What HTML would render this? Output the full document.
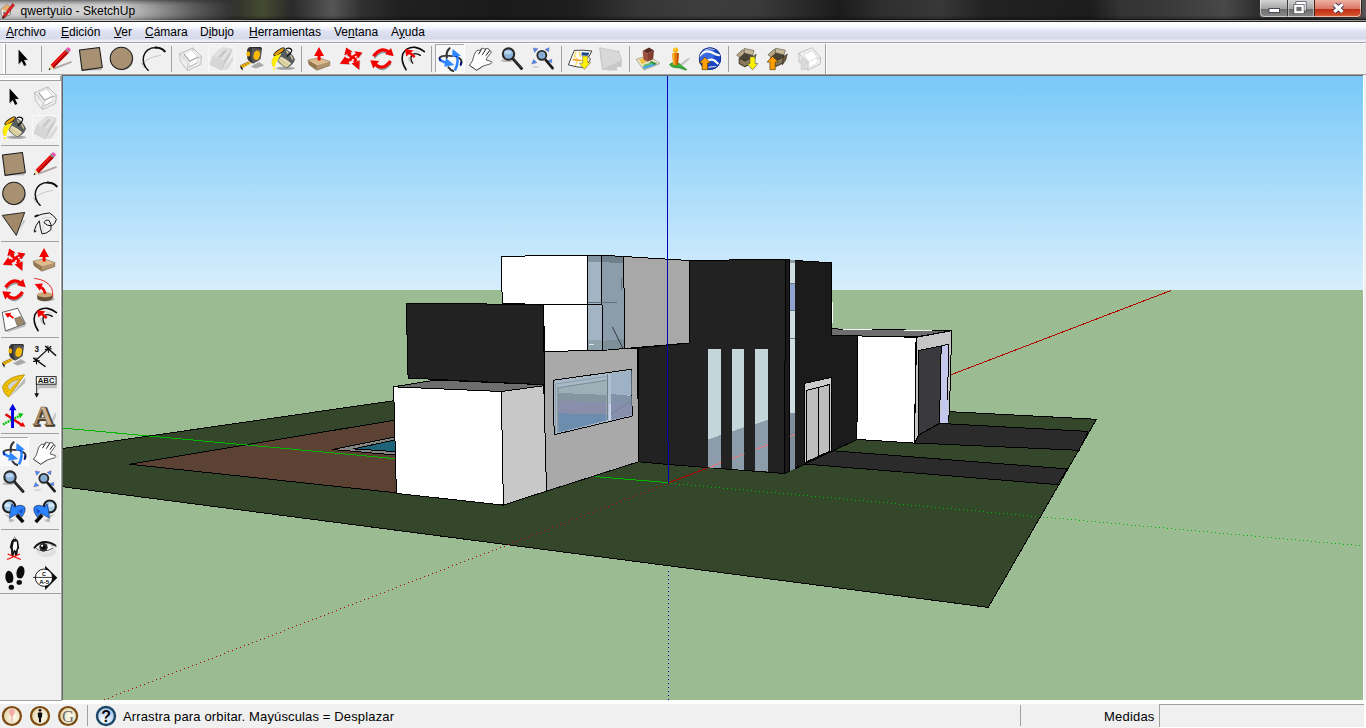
<!DOCTYPE html>
<html lang="es">
<head>
<meta charset="utf-8">
<title>qwertyuio - SketchUp</title>
<style>
html,body{margin:0;padding:0;width:1366px;height:728px;overflow:hidden;background:#f0f0f0;}
body{position:relative;font-family:"Liberation Sans","DejaVu Sans",sans-serif;font-size:12px;color:#000;}
.abs{position:absolute;}
#titlebar{left:0;top:0;width:1366px;height:22px;overflow:hidden;background:
linear-gradient(to bottom,rgba(0,0,0,0) 0,rgba(0,0,0,0) 15px,rgba(0,0,0,.28) 19px),
linear-gradient(to right,#2c2c2c 0,#2c2c2c 228px,#454b30 262px,#2a2a2a 292px,#565656 332px,#303030 362px,#202020 400px,#1a1a1a 500px,#1e1e1e 575px,#363636 640px,#3d3d3d 700px,#3a3a3a 760px,#2a2a2a 800px,#1c1c1c 840px,#2e2e2e 880px,#383838 940px,#222 985px,#1c1c1c 1090px,#333 1120px,#383838 1160px,#484848 1225px,#2e2e2e 1258px,#2a2a2a 1300px,#555 1366px);}
#glow{left:0;top:0;width:240px;height:20px;background:linear-gradient(to bottom,rgba(255,255,255,.3) 0,rgba(255,255,255,.52) 2px,rgba(255,255,255,.74) 5px,rgba(255,255,255,.8) 10px,rgba(255,255,255,.76) 15px,rgba(255,255,255,.6) 19px);-webkit-mask-image:linear-gradient(to right,#000 0,#000 120px,rgba(0,0,0,.62) 158px,rgba(0,0,0,.28) 195px,transparent 238px);mask-image:linear-gradient(to right,#000 0,#000 120px,rgba(0,0,0,.62) 158px,rgba(0,0,0,.28) 195px,transparent 238px);}
#tb-l1{left:0;top:19px;width:1366px;height:1px;background:linear-gradient(to right,#8e8e8e 0,#8a8a8a 130px,#444 185px,#161616 260px,#161616 100%);}
#tb-l2{left:0;top:20px;width:1366px;height:1px;background:linear-gradient(to right,#e0e0e0 0,#d0d0d0 150px,#a8a8a8 300px,#a0a0a0 1366px);}
#tb-l3{left:0;top:21px;width:1366px;height:1px;background:#222;}
#title{left:20.5px;top:4px;font-size:12px;line-height:14px;color:#000;white-space:nowrap;letter-spacing:0.03px;}
#menubar{left:0;top:22px;width:1366px;height:20px;background:linear-gradient(to bottom,#ffffff 0,#fbfcfe 4px,#eceff8 7px,#dfe2f1 9px,#d9ddee 14px,#d5d9ea 17px,#e8eaf4 18px,#f4f5fa 20px);}
.mi{position:absolute;top:3px;line-height:14px;white-space:nowrap;font-size:12px;}
.mi u{text-decoration:underline;}
#toolbar{left:0;top:42px;width:1366px;height:33px;background:#f0f0f0;}
#lefttb{left:0;top:75px;width:62px;height:625px;background:#f0f0f0;}
#viewport{left:63px;top:76px;width:1300px;height:624px;overflow:hidden;}
#status{left:0;top:700px;width:1366px;height:28px;background:#f0f0f0;}
</style>
</head>
<body>
<div id="titlebar" class="abs">
<div id="glow" class="abs"></div>
<div id="title" class="abs">qwertyuio - SketchUp</div>
<div id="tb-l1" class="abs"></div><div id="tb-l2" class="abs"></div><div id="tb-l3" class="abs"></div>
</div>
<div id="menubar" class="abs">
<span class="mi" style="left:6px"><u>A</u>rchivo</span>
<span class="mi" style="left:61px"><u>E</u>dición</span>
<span class="mi" style="left:114px"><u>V</u>er</span>
<span class="mi" style="left:145px"><u>C</u>ámara</span>
<span class="mi" style="left:200px">D<u>i</u>bujo</span>
<span class="mi" style="left:249px"><u>H</u>erramientas</span>
<span class="mi" style="left:334px">Ve<u>n</u>tana</span>
<span class="mi" style="left:391px">A<u>y</u>uda</span>
</div>
<div id="viewport" class="abs">
<svg id="scene" width="1300" height="624" viewBox="63 76 1300 624" style="display:block" shape-rendering="crispEdges">
<defs>
<linearGradient id="sky" x1="0" y1="75" x2="0" y2="290" gradientUnits="userSpaceOnUse">
<stop offset="0" stop-color="#78c8f8"/><stop offset="1" stop-color="#d7eefc"/>
</linearGradient>
<linearGradient id="win" x1="0" y1="0" x2="1" y2="1">
<stop offset="0" stop-color="#aebfd0"/><stop offset="0.5" stop-color="#8f9fb8"/><stop offset="1" stop-color="#7f93ad"/>
</linearGradient>
</defs>
<rect x="62" y="75" width="1301" height="215" fill="url(#sky)"/>
<rect x="62" y="290" width="1301" height="410" fill="#9bbc92"/>
<g stroke="#000" stroke-width="1" stroke-linejoin="round">
<!-- ground -->
<polygon points="40,451.7 485.6,387.5 1096.5,419.3 988.2,607.4 40,483.8" fill="#34472a"/>
<!-- deck -->
<polygon points="129.5,464.2 394,420.3 398,493" fill="#5b4232"/>
<!-- pool -->
<polygon points="332.5,449.5 395,437 395,455" fill="#848484"/>
<polygon points="353.6,448.9 395,439.9 395,451.6" fill="#1e6478"/>
<!-- driveway strips -->
<polygon points="939.5,423.4 1088,431.4 1079.1,450.3 915,443 918.9,434.9" fill="#2b2b2b"/>
<polygon points="831.9,450.7 1067.5,468.9 1057.1,484.6 804.2,464" fill="#2b2b2b"/>
</g>
<!-- axes behind house -->
<line x1="62" y1="428" x2="396" y2="458.7" stroke="#00b400" stroke-width="1"/>
<line x1="669" y1="482.7" x2="1171" y2="290.5" stroke="#b40000" stroke-width="1"/>
<g stroke="#000" stroke-width="1" stroke-linejoin="round">
<!-- right wing -->
<polygon points="831.1,328.9 951.7,330.7 916.6,336.8 831.1,335.6" fill="#6e6e6e"/>
<polygon points="857.6,335.9 916.1,337.3 914.4,443.1 856.9,439.4" fill="#ffffff"/>
<polygon points="916.6,337.3 951.7,330.7 949.4,412.6 947.7,422.5 939.5,423.2 918.9,434.9 914.4,443.1" fill="#c6c6c6"/>
<polygon points="918.9,350.5 941.2,345.9 939.5,423.2 918.9,434.9" fill="#3a3a3e"/>
<polygon points="941.9,345.6 948.2,344.2 947.7,422.5 940.3,423.2" fill="#c3c8ec" stroke="none"/><polyline points="941.2,345.9 948.2,344.2 947.9,400" fill="none"/>
<!-- black right face of tall block -->
<polygon points="794.8,260.5 831.8,262.8 831.8,335.6 857.6,335.9 856.9,439.6 794.8,468.8" fill="#1b1b1b"/>
<line x1="832.3" y1="301.5" x2="832.3" y2="322.5" stroke="#fff" stroke-width="1"/>
<line x1="843" y1="329.4" x2="872" y2="329.9" stroke="#f4f4f4" stroke-width="1"/>
<line x1="904" y1="330.5" x2="932" y2="330.8" stroke="#f4f4f4" stroke-width="1"/>
<!-- doors -->
<polygon points="804.9,383.3 831.8,377.3 831.1,450.8 804.2,463" fill="#cdcdcd"/>
<polygon points="806.5,390.4 829.5,384.5 829.5,451.3 806.5,461.8" fill="#bdbdbd"/>
<line x1="818.7" y1="387.6" x2="818.7" y2="456.4"/>
<!-- glass strip -->
<polygon points="789.6,260 794.8,260.3 794.8,468.8 789.6,471" fill="#cfdde0" stroke="none"/>
<rect x="789.6" y="283" width="5.2" height="27" fill="#8fa5cf" stroke="none"/>
<polygon points="789.6,412.6 794.8,412.6 794.8,468.8 789.6,471" fill="#7e8e9d" stroke="none"/>
<rect x="789.6" y="260" width="5.2" height="3" fill="#8d9da3" stroke="none"/>
<g stroke="none" fill="#6c7880"><rect x="789.6" y="282.5" width="5.2" height="1"/><rect x="789.6" y="309.5" width="5.2" height="1"/><rect x="789.6" y="338" width="5.2" height="1"/></g>
<!-- dark front face -->
<polygon points="689.2,260.5 785.4,259.3 784.6,473.5 668,464.5 638.4,461.8 638.4,348 689.2,343" fill="#222222"/>
<polygon points="785.4,259.3 789.6,260 789.6,471.2 784.6,473.5" fill="#1a1a1a"/>
<!-- vertical windows -->
<polygon points="707.6,348.8 721.2,348.8 721.2,468.4 707.6,467.3" fill="#c5d6da" stroke="none"/>
<polygon points="732,348.8 744.4,348.8 744.4,470 732,469" fill="#c5d6da" stroke="none"/>
<polygon points="755.4,348.8 768.3,348.8 767.8,471.6 754.9,470.6" fill="#c5d6da" stroke="none"/>
<polygon points="707.6,439.6 721.2,434.9 721.2,468.4 707.6,467.3" fill="#8c9cab" stroke="none"/>
<polygon points="732,431.4 744.4,427.1 744.4,470 732,469" fill="#8c9cab" stroke="none"/>
<polygon points="755.4,423.9 768.3,419.6 767.8,471.6 754.9,470.6" fill="#8c9cab" stroke="none"/>
<clipPath id="vw"><polygon points="707.6,348.8 721.2,348.8 721.2,468.4 707.6,467.3"/><polygon points="732,348.8 744.4,348.8 744.4,470 732,469"/><polygon points="755.4,348.8 768.3,348.8 767.8,471.6 754.9,470.6"/><polygon points="789.6,260 794.8,260.3 794.8,468.8 789.6,471"/></clipPath>
<line x1="669" y1="482.7" x2="1171" y2="290.5" stroke="#e07880" stroke-width="1" clip-path="url(#vw)"/>
<!-- grey mid wall -->
<polygon points="544,351.7 637.7,348.2 638.4,461.8 545.5,491.5" fill="#a9a9a9"/>
<!-- window -->
<polygon points="553,380.3 631.7,369.2 632.1,416.2 554.2,434.7" fill="#a9b9c7"/>
<g stroke="none">
<clipPath id="wl"><polygon points="557.9,387.8 606.5,380.2 606.5,420.5 558.5,432.5"/></clipPath>
<clipPath id="wr"><polygon points="611,373.5 631.5,370.5 631.8,415.3 611,420.2"/></clipPath>
<g clip-path="url(#wl)">
<polygon points="550,380 607,372 607,386 550,394" fill="#9fb2b8"/>
<polygon points="550,392 607,394.5 607,402 550,400.8" fill="#84969f"/>
<polygon points="550,400.8 607,402 607,414.5 550,413" fill="#898faa"/>
<polygon points="550,413 607,414.5 607,440 550,440" fill="#6c8dad"/>
<polygon points="550,386 607,378 607,395 550,392.5" fill="#9db0b7"/>
</g>
<g clip-path="url(#wr)">
<rect x="610" y="368" width="23" height="27" fill="#9db2c4"/>
<polygon points="610,394 633,396 633,404 610,402" fill="#8292a8"/>
<polygon points="610,402 633,404 633,420 610,422" fill="#868fae"/>
</g>
<polygon points="606.5,374 608.3,373.7 608.3,420 606.5,420.5" fill="#6f7f86"/>
<polygon points="608.3,373.7 611,373.3 611,419.8 608.3,420" fill="#aebfd0"/>
<polygon points="608.6,404 610.8,404 610.8,419.8 608.6,420" fill="#c9d3ee"/>
<line x1="611" y1="414.5" x2="631.8" y2="400.5" stroke="#6f7f86" stroke-width="0.8"/>
<polyline points="557.9,432 557.9,387.8 606.5,380.2" fill="none" stroke="#6f7f86" stroke-width="0.8"/>
<polyline points="555.5,433 555.5,384 606.5,376.6" fill="none" stroke="#8797a3" stroke-width="0.8"/>
</g>
<!-- upper grey face -->
<polygon points="623.6,256.5 689.2,260.5 689.2,343 624.8,348.5" fill="#a8a8a8"/>
<!-- glass -->
<polygon points="587.5,255.7 601.2,255.7 601.2,304.6 602,304.6 602,350.4 587.5,350.4" fill="#a3b5c4"/>
<polygon points="601.2,255.7 623.6,256.2 624.8,348.5 602,350.4 602,304.6 601.2,304.6" fill="#8b9cab"/>
<g stroke="none">
<rect x="588" y="256.2" width="13" height="5.3" fill="#80939f"/>
<polygon points="601.7,256.2 623.2,256.7 623.2,262.8 601.7,262.3" fill="#6f7f8a"/>
<rect x="588" y="340" width="13.5" height="10" fill="#8fa3ad"/>
<polygon points="602.5,341 624.2,338.5 624.3,348 602.5,350" fill="#7d909a"/>
<rect x="589" y="344" width="5" height="1.2" fill="#d8e4ea"/>
</g>
<line x1="587.5" y1="302.6" x2="617" y2="302.6" stroke="#5f6f78" stroke-width="1"/>
<line x1="587.5" y1="304.6" x2="602" y2="304.6" stroke="#000" stroke-width="1"/>
<line x1="612.4" y1="327" x2="623.1" y2="348.7" stroke="#222" stroke-width="0.8"/>
<line x1="621.8" y1="278" x2="621.8" y2="289.5" stroke="#5f6f78" stroke-width="1"/>
<!-- upper white box -->
<polygon points="501.1,256.2 587.5,255.5 587.5,304.6 502.3,303.8" fill="#ffffff"/>
<polygon points="543.6,304.6 587.5,304.6 588,350.6 544.5,351.5" fill="#ffffff"/>
<!-- dark left block -->
<polygon points="406.2,303.3 543.3,304.5 544.5,384.8 408.1,378" fill="#222222"/>
<!-- front white box -->
<polygon points="393.6,386.8 436,380 544.5,384.8 543.8,385.7 501.3,391.5" fill="#6e6e6e"/>
<polygon points="501.3,391.5 543.8,385.7 546.5,491.1 503.4,505.1" fill="#c8c8c8"/>
<polygon points="393.6,386.8 501.3,391.5 503.4,505.1 396.4,493.4" fill="#ffffff"/>
</g>
<!-- axes front -->
<rect x="667" y="76" width="1" height="365" fill="#0000b8"/><rect x="668" y="441" width="1" height="42" fill="#0000b8"/>
<line x1="595" y1="476.6" x2="668" y2="482.6" stroke="#00b400" stroke-width="1"/>
<path d="M664,484.5h1M660,486.5h1M656,487.5h1M652,489.5h1M648,490.5h1M644,492.5h1M640,493.5h1M636,495.5h1M632,496.5h1M628,498.5h1M624,499.5h1M620,501.5h1M616,503.5h1M612,504.5h1M608,506.5h1M604,507.5h1M600,509.5h1M596,510.5h1M592,512.5h1M588,513.5h1M584,515.5h1M580,516.5h1M576,518.5h1M572,519.5h1M568,521.5h1M564,523.5h1M560,524.5h1M556,526.5h1M552,527.5h1M548,529.5h1M544,530.5h1M540,532.5h1M536,533.5h1M532,535.5h1M528,536.5h1M524,538.5h1M520,539.5h1M516,541.5h1M512,542.5h1M508,544.5h1M504,546.5h1M500,547.5h1M496,549.5h1M492,550.5h1M488,552.5h1M484,553.5h1M480,555.5h1M476,556.5h1M472,558.5h1M468,559.5h1M464,561.5h1M460,562.5h1M456,564.5h1M452,565.5h1M448,567.5h1M444,569.5h1M440,570.5h1M436,572.5h1M432,573.5h1M428,575.5h1M424,576.5h1M420,578.5h1M416,579.5h1M412,581.5h1M408,582.5h1M404,584.5h1M400,585.5h1M396,587.5h1M392,589.5h1M388,590.5h1M384,592.5h1M380,593.5h1M376,595.5h1M372,596.5h1M368,598.5h1M364,599.5h1M360,601.5h1M356,602.5h1M352,604.5h1M348,605.5h1M344,607.5h1M340,608.5h1M336,610.5h1M332,612.5h1M328,613.5h1M324,615.5h1M320,616.5h1M316,618.5h1M312,619.5h1M308,621.5h1M304,622.5h1M300,624.5h1M296,625.5h1M292,627.5h1M288,628.5h1M284,630.5h1M280,632.5h1M276,633.5h1M272,635.5h1M268,636.5h1M264,638.5h1M260,639.5h1M256,641.5h1M252,642.5h1M248,644.5h1M244,645.5h1M240,647.5h1M236,648.5h1M232,650.5h1M228,651.5h1M224,653.5h1M220,655.5h1M216,656.5h1M212,658.5h1M208,659.5h1M204,661.5h1M200,662.5h1M196,664.5h1M192,665.5h1M188,667.5h1M184,668.5h1M180,670.5h1M176,671.5h1M172,673.5h1M168,674.5h1M164,676.5h1M160,678.5h1M156,679.5h1M152,681.5h1M148,682.5h1M144,684.5h1M140,685.5h1M136,687.5h1M132,688.5h1M128,690.5h1M124,691.5h1M120,693.5h1M116,694.5h1M112,696.5h1M108,698.5h1M104,699.5h1" stroke="#b00000" stroke-width="1" fill="none" shape-rendering="crispEdges"/>
<path d="M671,483.5h1M675,483.5h1M679,484.5h1M683,484.5h1M687,484.5h1M691,485.5h1M695,485.5h1M699,485.5h1M703,486.5h1M707,486.5h1M711,487.5h1M715,487.5h1M719,487.5h1M723,488.5h1M727,488.5h1M731,488.5h1M735,489.5h1M739,489.5h1M743,489.5h1M747,490.5h1M751,490.5h1M755,491.5h1M759,491.5h1M763,491.5h1M767,492.5h1M771,492.5h1M775,492.5h1M779,493.5h1M783,493.5h1M787,493.5h1M791,494.5h1M795,494.5h1M799,495.5h1M803,495.5h1M807,495.5h1M811,496.5h1M815,496.5h1M819,496.5h1M823,497.5h1M827,497.5h1M831,497.5h1M835,498.5h1M839,498.5h1M843,498.5h1M847,499.5h1M851,499.5h1M855,500.5h1M859,500.5h1M863,500.5h1M867,501.5h1M871,501.5h1M875,501.5h1M879,502.5h1M883,502.5h1M887,502.5h1M891,503.5h1M895,503.5h1M899,504.5h1M903,504.5h1M907,504.5h1M911,505.5h1M915,505.5h1M919,505.5h1M923,506.5h1M927,506.5h1M931,506.5h1M935,507.5h1M939,507.5h1M943,508.5h1M947,508.5h1M951,508.5h1M955,509.5h1M959,509.5h1M963,509.5h1M967,510.5h1M971,510.5h1M975,510.5h1M979,511.5h1M983,511.5h1M987,512.5h1M991,512.5h1M995,512.5h1M999,513.5h1M1003,513.5h1M1007,513.5h1M1011,514.5h1M1015,514.5h1M1019,514.5h1M1023,515.5h1M1027,515.5h1M1031,516.5h1M1035,516.5h1M1039,516.5h1M1043,517.5h1M1047,517.5h1M1051,517.5h1M1055,518.5h1M1059,518.5h1M1063,518.5h1M1067,519.5h1M1071,519.5h1M1075,519.5h1M1079,520.5h1M1083,520.5h1M1087,521.5h1M1091,521.5h1M1095,521.5h1M1099,522.5h1M1103,522.5h1M1107,522.5h1M1111,523.5h1M1115,523.5h1M1119,523.5h1M1123,524.5h1M1127,524.5h1M1131,525.5h1M1135,525.5h1M1139,525.5h1M1143,526.5h1M1147,526.5h1M1151,526.5h1M1155,527.5h1M1159,527.5h1M1163,527.5h1M1167,528.5h1M1171,528.5h1M1175,529.5h1M1179,529.5h1M1183,529.5h1M1187,530.5h1M1191,530.5h1M1195,530.5h1M1199,531.5h1M1203,531.5h1M1207,531.5h1M1211,532.5h1M1215,532.5h1M1219,533.5h1M1223,533.5h1M1227,533.5h1M1231,534.5h1M1235,534.5h1M1239,534.5h1M1243,535.5h1M1247,535.5h1M1251,535.5h1M1255,536.5h1M1259,536.5h1M1263,537.5h1M1267,537.5h1M1271,537.5h1M1275,538.5h1M1279,538.5h1M1283,538.5h1M1287,539.5h1M1291,539.5h1M1295,539.5h1M1299,540.5h1M1303,540.5h1M1307,540.5h1M1311,541.5h1M1315,541.5h1M1319,542.5h1M1323,542.5h1M1327,542.5h1M1331,543.5h1M1335,543.5h1M1339,543.5h1M1343,544.5h1M1347,544.5h1M1351,544.5h1M1355,545.5h1M1359,545.5h1" stroke="#00b000" stroke-width="1" fill="none" shape-rendering="crispEdges"/>
<path d="M668,571.5h1M668,575.5h1M668,579.5h1M668,583.5h1M668,587.5h1M668,591.5h1M668,595.5h1M668,599.5h1M668,603.5h1M668,607.5h1M668,611.5h1M668,615.5h1M668,619.5h1M668,623.5h1M668,627.5h1M668,631.5h1M668,635.5h1M668,639.5h1M668,643.5h1M668,647.5h1M668,651.5h1M668,655.5h1M668,659.5h1M668,663.5h1M668,667.5h1M668,671.5h1M668,675.5h1M668,679.5h1M668,683.5h1M668,687.5h1M668,691.5h1M668,695.5h1M668,699.5h1" stroke="#0000b4" stroke-width="1" fill="none" shape-rendering="crispEdges"/>
</svg>

</div>
<div id="status" class="abs">
<span class="abs" style="left:123px;top:9px;font-size:13px;line-height:15px;letter-spacing:0.14px;white-space:nowrap">Arrastra para orbitar. Mayúsculas = Desplazar</span>
<span class="abs" style="left:1104px;top:9px;font-size:13px;line-height:15px;letter-spacing:0.2px;white-space:nowrap">Medidas</span>
</div>
<svg id="chrome" class="abs" style="left:0;top:0;pointer-events:none" width="1366" height="728" viewBox="0 0 1366 728">
<defs><g id="i-select" transform="translate(-10.000,-5.000) scale(0.09517)"><path d="M200,88 L200,243 L233,208 L258,258 L282,246 L257,196 L297,192 Z" fill="#9a9a9a" opacity="0.6"/>
<path d="M195,80 L195,235 L228,200 L253,252 L277,240 L252,190 L292,186 Z" fill="#000" stroke="#fff" stroke-width="7" stroke-linejoin="round" paint-order="stroke"/></g>
<g id="i-pencil" transform="translate(-47.000,-5.000) scale(0.09517)"><path d="M565,280 L745,212" stroke="#b0a6a6" stroke-width="20" stroke-linecap="round"/>
<path d="M510,297 L532,240 L565,272 Z" fill="#e8dca0"/>
<path d="M510,297 L519,272 L534,287 Z" fill="#111"/>
<path d="M532,240 L690,78 L724,110 L565,272 Z" fill="#e80000"/>
<path d="M543,252 L700,90 L706,95 L549,258 Z" fill="#ff5050"/>
<path d="M548,256 L706,95 L724,110 L565,272 Z" fill="#b80000"/>
<path d="M682,86 L700,68 L734,100 L716,118 Z" fill="#888"/>
<path d="M698,70 L712,55 Q735,55 745,88 L732,102 Z" fill="#f050b0"/></g>
<g id="i-rect" transform="translate(-78.000,-5.000) scale(0.09517)"><path d="M872,300 L1062,296 L1075,275 L880,285 Z" fill="#b0b0b0"/>
<path d="M835,85 L1045,58 L1075,268 L862,298 Z" fill="#a89172" stroke="#1a1a1a" stroke-width="11" stroke-linejoin="round"/></g>
<g id="i-circle" transform="translate(-109.000,-5.000) scale(0.09517)"><circle cx="1283" cy="180" r="117" fill="#b0b0b0"/>
<circle cx="1275" cy="172" r="117" fill="#a89172" stroke="#1a1a1a" stroke-width="11"/></g>
<g id="i-arc" transform="translate(-40.000,-5.000) scale(0.09517)"><path d="M440,232 Q500,160 640,140" fill="none" stroke="#999" stroke-width="5"/>
<path d="M436,212 Q440,250 470,275" fill="none" stroke="#888" stroke-width="5"/>
<path d="M505,298 Q440,230 458,150 Q485,60 585,58 Q650,62 682,100" fill="none" stroke="#111" stroke-width="15" stroke-linecap="round"/>
<path d="M505,298 Q465,262 455,225" fill="none" stroke="#111" stroke-width="9" stroke-linecap="round"/>
<path d="M585,58 Q650,62 680,98" fill="none" stroke="#111" stroke-width="20" stroke-linecap="round"/></g>
<g id="i-comp" transform="translate(-8.000,-5.000) scale(0.09517)"><g fill="none" stroke="#bcbcbc" stroke-width="10" stroke-linejoin="round">
<path d="M100,122 L240,62 L330,152 L190,218 Z"/>
<path d="M100,122 L108,205 L185,300 L190,218 M185,300 L322,235 L330,152 M240,62 L243,140"/>
<path d="M108,205 L243,140 L322,235" stroke="#d8d8d8"/>
</g>
<path d="M145,122 L230,85 L292,160 L207,202 Z" fill="#fff" stroke="#bdbdbd" stroke-width="5"/>
<path d="M145,122 L207,202 L203,262 L150,185 Z" fill="#e6e6e6" stroke="#c8c8c8" stroke-width="4"/>
<path d="M207,202 L292,160 L287,218 L203,262 Z" fill="#fff" stroke="#c8c8c8" stroke-width="4"/>
<path d="M145,122 L207,202 L292,160" fill="none" stroke="#707070" stroke-width="7" stroke-linejoin="round"/>
<path d="M203,262 L287,218" fill="none" stroke="#909090" stroke-width="6"/></g>
<g id="i-eraser" transform="translate(-3.000,-34.000) scale(0.08244)"><path d="M200,692 L322,528 L335,565 L262,682 Z" fill="#dadada"/>
<path d="M50,625 L86,520 L216,572 L190,692 Z" fill="#d6d6d6"/>
<path d="M86,520 L200,420 L316,440 L216,572 Z" fill="#e2e2e2"/>
<path d="M216,572 L316,440 L292,512 L190,692 Z" fill="#cacaca"/>
<path d="M50,625 L86,520 L200,420 L316,440 L292,512 L190,692 Z" fill="none" stroke="#c4c4c4" stroke-width="6" stroke-linejoin="round"/>
<path d="M86,520 L216,572 L316,440 M216,572 L190,692" fill="none" stroke="#cecece" stroke-width="5"/>
<path d="M150,528 L222,452 L248,462 L176,545 Z" fill="#d2d2d2" stroke="#b4b4b4" stroke-width="5"/>
<path d="M166,530 L236,458" stroke="#a8a8a8" stroke-width="9" stroke-dasharray="7 6"/></g>
<g id="i-tape" transform="translate(-4.000,-3.000) scale(0.04119)"><path d="M360,545 L560,435 L685,520 L480,595 Z" fill="#a8a8a8"/>
<path d="M300,428 L372,462 L165,582 L100,520 Z" fill="#f2b600"/>
<path d="M155,500 l40,55 M215,470 l40,55 M275,445 l40,50" stroke="#7a5c00" stroke-width="18"/>
<path d="M100,520 L165,582 L158,652 L108,575 Z" fill="#1c1c1c"/>
<path d="M100,520 L300,428" stroke="#444" stroke-width="8"/>
<path d="M320,78 L598,72 Q632,90 630,135 L600,360 Q585,395 420,472 Q300,420 280,350 L268,175 Q275,100 320,78 Z" fill="#585858"/>
<path d="M320,78 Q275,100 268,175 L280,350 Q300,420 420,472 Q370,400 372,300 Q365,160 400,80 Z" fill="#363636"/>
<path d="M320,78 L598,72 Q632,90 630,135 L612,120 Q590,100 400,100 Z" fill="#2a2a2a"/>
<ellipse cx="298" cy="240" rx="46" ry="62" fill="#f0b000"/>
<ellipse cx="502" cy="272" rx="92" ry="130" transform="rotate(14 502 272)" fill="#444c5c"/>
<ellipse cx="502" cy="272" rx="78" ry="116" transform="rotate(14 502 272)" fill="#f7ba00"/></g>
<g id="i-paint" transform="translate(-2.000,-4.000) scale(0.04120)"><ellipse cx="400" cy="612" rx="235" ry="42" fill="#b4b4b4"/>
<ellipse cx="400" cy="612" rx="170" ry="28" fill="#a4a4a4"/>
<path d="M200,432 L372,128 Q530,200 632,400 Q600,525 430,612 Q290,555 200,432 Z" fill="#565c60"/>
<path d="M218,425 L292,332 Q430,400 532,492 Q490,562 420,592 Q300,540 218,425 Z" fill="#d9d0a0"/>
<path d="M292,332 Q430,400 532,492 L505,530 Q400,440 262,370 Z" fill="#e4dcb4"/>
<path d="M408,192 L440,180 L482,250 L452,272 Z M500,292 L542,290 L592,392 L562,412 Z" fill="#c9c090"/>
<ellipse cx="245" cy="215" rx="153" ry="46" transform="rotate(-35 245 215)" fill="#e8a000" stroke="#26282a" stroke-width="24"/>
<path d="M300,262 Q170,285 110,340 Q35,445 100,582 L150,578 Q158,480 200,432 Q240,345 300,262 Z" fill="#ffee00"/>
<path d="M110,340 Q35,445 100,582" fill="none" stroke="#d8b800" stroke-width="10"/>
<ellipse cx="118" cy="636" rx="22" ry="27" fill="#ffee00"/>
<path d="M420,135 Q520,105 552,172 Q548,245 438,322" fill="none" stroke="#0a0a0a" stroke-width="28" stroke-linecap="round"/></g>
<g id="i-pushpull" transform="translate(-8.000,-5.000) scale(0.09517)"><path d="M180,300 L320,250 L318,240 L175,290 Z" fill="#c0c0c0"/>
<path d="M85,190 L200,165 L315,205 L180,245 Z" fill="#dcbc8c"/>
<path d="M85,190 L180,245 L176,296 L95,238 Z" fill="#94794f"/>
<path d="M180,245 L315,205 L312,246 L176,296 Z" fill="#b3946a"/>
<path d="M85,190 L200,165 L315,205 L312,246 L176,296 L95,238 Z" fill="none" stroke="#6e5a3c" stroke-width="5"/>
<path d="M200,52 L148,148 L185,148 L185,195 L216,195 L216,148 L252,148 Z" fill="#f20000"/></g>
<g id="i-move" transform="translate(-39.000,-5.000) scale(0.09517)"><g transform="translate(6,7)" fill="#9aa" opacity="0.6">
<path d="M485,58 L466,140 L550,100 Z M655,110 L572,98 L612,172 Z M622,292 L542,226 L627,192 Z M418,228 L474,150 L522,234 Z"/>
</g>
<path d="M508,120 L590,205 M610,135 L480,200" stroke="#f20000" stroke-width="44"/>
<path d="M485,58 L466,140 L550,100 Z M655,110 L572,98 L612,172 Z M622,292 L542,226 L627,192 Z M418,228 L474,150 L522,234 Z" fill="#f20000"/>
<path d="M535,128 l16,-8 l8,16 l-16,8 Z M500,160 l16,-8 l8,16 l-16,8 Z M575,150 l16,-8 l8,16 l-16,8 Z M545,185 l16,-8 l8,16 l-16,8 Z" fill="#fff"/></g>
<g id="i-rotate" transform="translate(-70.000,-5.000) scale(0.09517)"><path d="M775,160 Q860,55 945,125" fill="none" stroke="#8a9a9a" stroke-width="16" transform="translate(6,12)"/>
<path d="M948,215 Q870,315 795,250" fill="none" stroke="#8a9a9a" stroke-width="16" transform="translate(8,12)"/>
<path d="M772,150 Q855,40 940,112" fill="none" stroke="#f20000" stroke-width="34"/>
<path d="M895,128 L985,150 L957,62 Z" fill="#f20000"/>
<path d="M952,200 Q875,305 795,240" fill="none" stroke="#f20000" stroke-width="34"/>
<path d="M738,192 L832,200 L770,278 Z" fill="#f20000"/></g>
<g id="i-offset" transform="translate(-5.000,-3.000) scale(0.04122)"><path d="M245,625 Q110,420 165,240 Q260,60 470,82 Q590,105 690,185" fill="none" stroke="#0a0a0a" stroke-width="38" stroke-linecap="round"/>
<path d="M405,465 Q320,340 400,255 Q480,200 590,275" fill="none" stroke="#0a0a0a" stroke-width="32" stroke-linecap="round"/>
<path d="M310,330 Q315,400 350,440" fill="none" stroke="#aaa" stroke-width="22" stroke-linecap="round"/>
<path d="M440,165 L580,200" stroke="#bbb" stroke-width="16" stroke-linecap="round"/>
<path d="M335,220 L455,318" stroke="#f20000" stroke-width="62"/>
<path d="M218,122 L425,155 L250,302 Z" fill="#f20000"/></g>
<g id="i-orbit" transform="translate(-5.000,-3.000) scale(0.04119)"><path d="M378,105 Q285,195 312,335" fill="none" stroke="#333" stroke-width="52" stroke-linecap="round"/>
<path d="M140,325 Q220,265 440,292" fill="none" stroke="#3a3a3a" stroke-width="44" stroke-linecap="round"/>
<path d="M350,565 Q400,640 468,658" fill="none" stroke="#333" stroke-width="50" stroke-linecap="round"/>
<path d="M600,335 Q710,400 650,505" fill="none" stroke="#2a2a2a" stroke-width="44" stroke-linecap="round"/>
<path d="M655,440 L645,510" stroke="#001888" stroke-width="40" stroke-linecap="round"/>
<path d="M562,285 Q600,470 508,640" fill="none" stroke="#2a80ff" stroke-width="62"/>
<path d="M452,122 L655,288 L438,302 Z" fill="#3088ff"/>
<path d="M440,302 L560,292 L555,330 Z" fill="#0030d0"/>
<path d="M135,352 Q165,425 310,455" fill="none" stroke="#2a80ff" stroke-width="58"/>
<path d="M130,340 L150,400" stroke="#001888" stroke-width="40" stroke-linecap="round"/>
<path d="M290,342 L492,512 L248,552 Z" fill="#3088ff"/></g>
<g id="i-pan" transform="translate(-40.000,-5.000) scale(0.09517)"><path d="M415,245 L445,200 L468,125 Q480,95 505,85 L520,90 Q535,65 555,65 L575,75 Q600,60 620,75 L625,90 Q645,90 642,110 L600,165 L590,188 L645,205 Q655,215 640,228 L560,252 L490,297 Z" fill="#fff" stroke="#111" stroke-width="7" stroke-linejoin="round"/>
<path d="M415,245 L490,297 L560,252" fill="none" stroke="#111" stroke-width="4"/>
<path d="M540,80 L512,125 M585,78 L552,130 M622,95 L590,140" stroke="#111" stroke-width="10" stroke-linecap="round"/></g>
<g id="i-zoom" transform="translate(-71.000,-5.000) scale(0.09517)"><ellipse cx="810" cy="195" rx="65" ry="16" fill="#bbb"/>
<path d="M875,180 L962,278" stroke="#1c1c1c" stroke-width="30" stroke-linecap="round"/>
<path d="M885,185 L960,270" stroke="#666" stroke-width="6" stroke-linecap="round"/>
<circle cx="825" cy="127" r="60" fill="#8fb4dc" stroke="#2a2a2a" stroke-width="22"/>
<ellipse cx="818" cy="108" rx="38" ry="22" fill="#b8d4f0"/></g>
<g id="i-zoomext" transform="translate(-102.000,-5.000) scale(0.09517)"><ellipse cx="1110" cy="262" rx="40" ry="8" fill="#ccc"/>
<path d="M1083,62 L1135,70 L1100,110 Z M1252,58 L1208,78 L1248,105 Z M1068,232 L1088,182 L1125,218 Z M1278,178 L1232,202 L1282,218 Z" fill="#3a8cff" stroke="#a04040" stroke-width="3"/>
<path d="M1215,188 L1288,275" stroke="#1c1c1c" stroke-width="28" stroke-linecap="round"/>
<circle cx="1175" cy="140" r="47" fill="#8fb4dc" stroke="#2a2a2a" stroke-width="20"/>
<path d="M1153,118 L1197,162 M1197,118 L1153,162" stroke="#7098c0" stroke-width="8"/></g>
<g id="i-addloc" transform="translate(-9.000,-5.000) scale(0.09517)"><path d="M88,240 L150,88 Q240,80 335,95 L300,160 L320,180 L268,270 Q180,268 88,240 Z" fill="#fff" stroke="#222" stroke-width="9" stroke-linejoin="round"/>
<path d="M170,100 L150,150 L190,190 L160,250 M130,180 L260,200 M200,100 L215,160" fill="none" stroke="#f8d860" stroke-width="14"/>
<path d="M135,185 L225,195" stroke="#f09020" stroke-width="12"/>
<path d="M228,108 L308,112 L296,145 L225,142 Z" fill="#1c4a88"/>
<path d="M238,148 L292,148 L292,218 L322,216 L256,288 L204,222 L238,222 Z" fill="#fff000" stroke="#555" stroke-width="5" stroke-linejoin="round"/></g>
<g id="i-terrain" transform="translate(-40.000,-5.000) scale(0.09517)"><path d="M450,288 L650,195 L648,262 L600,262 L600,300 L520,300 Z" fill="#c9c9c9"/>
<path d="M418,60 L615,100 L652,195 L450,290 Z" fill="#d8d8d8" stroke="#bdbdbd" stroke-width="7" stroke-linejoin="round"/>
<path d="M418,60 L430,190 L450,290" fill="none" stroke="#c4c4c4" stroke-width="7"/>
<path d="M615,85 L618,115 M630,225 L632,250" stroke="#c0c0c0" stroke-width="8"/></g>
<g id="i-building" transform="translate(-77.000,-5.000) scale(0.09517)"><path d="M800,182 L930,140 L1050,226 L882,296 Z" fill="#ece4c4" stroke="#8a8a7a" stroke-width="7" stroke-linejoin="round"/>
<path d="M830,185 L880,170 L905,215 L860,232 Z" fill="#f0c040"/>
<path d="M960,200 L1020,228 L990,245 L940,215 Z" fill="#2c8a3c"/>
<path d="M868,262 L985,228 L995,245 L885,285 Z" fill="#38a0e8"/>
<path d="M880,240 L960,215 L985,228 L868,262 Z" fill="#58b868"/>
<path d="M868,95 L935,58 L988,90 L916,122 Z" fill="#5a2a20"/>
<path d="M868,95 L916,122 L916,208 L878,185 Z" fill="#a04c38"/>
<path d="M916,122 L988,90 L978,182 L916,208 Z" fill="#7a3628"/>
<path d="M930,130 l40,-18 M930,150 l40,-18 M930,170 l40,-18 M930,190 l40,-18" stroke="#a86050" stroke-width="5"/></g>
<g id="i-photo" transform="translate(-108.000,-5.000) scale(0.09517)"><path d="M1262,232 L1350,165 L1366,175 L1290,245 Z" fill="#c4c4c4"/>
<path d="M1150,240 Q1160,215 1215,215 Q1265,220 1275,245 L1335,290 L1320,298 L1250,272 Q1180,280 1150,240 Z" fill="#3aaa3a" stroke="#2a7a2a" stroke-width="4"/>
<path d="M1178,125 Q1180,112 1215,112 Q1248,112 1248,128 L1240,235 Q1215,250 1190,238 Z" fill="#e87c00"/>
<path d="M1178,125 Q1180,112 1200,112 L1205,240 L1190,238 Z" fill="#f8b030"/>
<path d="M1228,114 Q1248,114 1248,128 L1240,235 L1225,242 Z" fill="#b85000"/>
<circle cx="1214" cy="84" r="27" fill="#f8b000"/>
<circle cx="1207" cy="77" r="12" fill="#ffe060"/></g>
<g id="i-earth" transform="translate(-9.000,-5.000) scale(0.10249)"><clipPath id="ec"><circle cx="195" cy="162" r="108"/></clipPath>
<circle cx="195" cy="162" r="108" fill="#1a46c8"/>
<g clip-path="url(#ec)">
<circle cx="150" cy="110" r="90" fill="#3a6ae0"/>
<path d="M80,150 Q150,60 230,110 Q280,140 320,120" fill="none" stroke="#fff" stroke-width="22"/>
<path d="M100,100 Q160,50 240,70 Q280,85 310,70" fill="none" stroke="#dde" stroke-width="12"/>
<path d="M150,190 Q220,150 260,200 Q290,230 320,200" fill="none" stroke="#fff" stroke-width="20"/>
<path d="M180,250 Q230,230 280,250" fill="none" stroke="#ccd" stroke-width="12"/>
<circle cx="195" cy="162" r="108" fill="none" stroke="#0a2a88" stroke-width="14"/>
</g>
<path d="M145,148 L200,205 L172,205 L172,270 L118,270 L118,205 L90,205 Z" fill="#ffa000" stroke="#4a3000" stroke-width="6" stroke-linejoin="round"/></g>
<g id="i-boxdown" transform="translate(-46.000,-5.000) scale(0.10249)"><path d="M435,83 m20,45 l60,-55 l35,30 l-60,50 Z" fill="#b8a888" stroke="#3a3428" stroke-width="5" stroke-linejoin="round"/>
<path d="M435,83 m95,-20 l95,20 l-12,45 l-85,-20 Z" fill="#c8b898" stroke="#3a3428" stroke-width="5" stroke-linejoin="round"/>
<path d="M435,83 m45,75 l50,-45 l85,20 l-10,75 l-70,35 l-55,-30 Z" fill="#4a4234" stroke="#2a2418" stroke-width="5" stroke-linejoin="round"/>
<path d="M435,83 m45,75 l55,30 l70,-35 l-2,50 l-68,35 l-55,-30 Z" fill="#8a7a5c" stroke="#2a2418" stroke-width="5" stroke-linejoin="round"/>
<path d="M435,83 m170,70 l40,-35 l-15,60 l-35,50 Z" fill="#6a5c44" stroke="#2a2418" stroke-width="5" stroke-linejoin="round"/>

<path d="M585,145 L635,145 L635,210 L662,210 L610,272 L558,210 L585,210 Z" fill="#fff000" stroke="#555" stroke-width="6" stroke-linejoin="round"/></g>
<g id="i-boxup" transform="translate(-77.000,-5.000) scale(0.10249)"><path d="M740,80 m20,45 l60,-55 l35,30 l-60,50 Z" fill="#b8a888" stroke="#3a3428" stroke-width="5" stroke-linejoin="round"/>
<path d="M740,80 m95,-20 l95,20 l-12,45 l-85,-20 Z" fill="#c8b898" stroke="#3a3428" stroke-width="5" stroke-linejoin="round"/>
<path d="M740,80 m45,75 l50,-45 l85,20 l-10,75 l-70,35 l-55,-30 Z" fill="#4a4234" stroke="#2a2418" stroke-width="5" stroke-linejoin="round"/>
<path d="M740,80 m45,75 l55,30 l70,-35 l-2,50 l-68,35 l-55,-30 Z" fill="#8a7a5c" stroke="#2a2418" stroke-width="5" stroke-linejoin="round"/>
<path d="M740,80 m170,70 l40,-35 l-15,60 l-35,50 Z" fill="#6a5c44" stroke="#2a2418" stroke-width="5" stroke-linejoin="round"/>

<path d="M806,140 L862,196 L832,196 L832,270 L780,270 L780,196 L752,196 Z" fill="#ffa000" stroke="#4a3000" stroke-width="6" stroke-linejoin="round"/></g>
<g id="i-house" transform="translate(-108.000,-5.000) scale(0.10249)"><g fill="none" stroke="#c0c0c0" stroke-width="9" stroke-linejoin="round">
<path d="M1060,110 L1190,55 L1275,150 L1150,215 Z"/>
<path d="M1060,110 L1065,190 L1150,275 L1150,215 M1150,275 L1270,215 L1275,150"/>
</g>
<path d="M1105,125 L1190,85 L1245,150 L1160,195 Z" fill="#fff" stroke="#c4c4c4" stroke-width="5"/>
<path d="M1160,195 L1245,150 L1240,205 L1158,250 Z" fill="#fff" stroke="#c8c8c8" stroke-width="4"/>
<path d="M1108,148 L1155,196 L1130,196 L1130,270 L1085,270 L1085,196 L1058,196 Z" fill="#dadada" stroke="#c4c4c4" stroke-width="5" stroke-linejoin="round"/></g>
<g id="i-polygon" transform="translate(-2.000,-6.000) scale(0.04946)"><path d="M465,290 L522,288 L400,490 Z" fill="#c4c4c4"/>
<path d="M45,190 L500,130 L330,595 Z" fill="#a08868" stroke="#151515" stroke-width="18" stroke-linejoin="round"/></g>
<g id="i-freehand" transform="translate(-33.000,-6.000) scale(0.04946)"><path d="M830,260 Q950,210 1060,240 M870,380 L880,530" fill="none" stroke="#aaa" stroke-width="8"/>
<path d="M710,215 Q850,150 1000,140 Q1090,190 1140,270 Q1130,340 1050,400 Q960,410 890,340 Q910,270 990,290 Q1050,360 1030,480 Q950,560 850,565 Q810,450 795,300 Q720,380 695,495" fill="none" stroke="#111" stroke-width="20" stroke-linecap="round" stroke-linejoin="round"/>
<path d="M700,215 L780,180" stroke="#111" stroke-width="34"/>
<path d="M675,495 L745,500 L700,540 Z" fill="#111"/></g>
<g id="i-followme" transform="translate(-33.000,-6.000) scale(0.09066)"><ellipse cx="510" cy="300" rx="95" ry="26" fill="#c0c0c0"/>
<path d="M410,250 L410,290 Q420,320 495,322 Q570,320 582,288 L582,250 Z" fill="#66513a"/>
<ellipse cx="496" cy="250" rx="86" ry="30" fill="#c9a97c"/>
<path d="M378,70 Q520,85 570,180 Q585,220 582,275" fill="none" stroke="#e00000" stroke-width="9"/>
<path d="M496,240 Q492,190 448,168" fill="none" stroke="#f20000" stroke-width="28"/>
<path d="M383,133 L472,128 L440,208 Z" fill="#f20000"/></g>
<g id="i-scale" transform="translate(-2.000,-36.000) scale(0.09066)"><path d="M62,655 L285,575 L278,600 L80,665 Z" fill="#bbb"/>
<path d="M25,445 L195,400 L280,570 L60,650 Z" fill="#fff" stroke="#222" stroke-width="8" stroke-linejoin="round"/>
<path d="M160,512 L225,490 L270,565 L190,592 Z" fill="#a08868" stroke="#444" stroke-width="5"/>
<path d="M95,470 L148,508" stroke="#f20000" stroke-width="20"/>
<path d="M52,458 L125,450 L88,508 Z" fill="#f20000"/></g>
<g id="i-dimension" transform="translate(-33.000,-6.000) scale(0.13196)"><path d="M262,178 L388,62" stroke="#0a0a0a" stroke-width="9"/>
<path d="M342,60 L425,135 M252,150 L345,218" stroke="#0a0a0a" stroke-width="11"/>
<path d="M362,58 L368,112 M340,88 L392,82 M272,148 L278,200 M250,178 L300,170" stroke="#0a0a0a" stroke-width="8"/>
<text x="262" y="108" font-family="Liberation Sans, sans-serif" font-weight="bold" font-size="62" fill="#111">3</text></g>
<g id="i-protractor" transform="translate(-2.000,-36.000) scale(0.13196)"><path d="M75,447 L192,338 L190,300 Z" fill="#b8b8b8"/>
<path d="M186,279 Q60,290 20,365 Q22,420 66,447 Z" fill="#f2c200" stroke="#a88400" stroke-width="6" stroke-linejoin="round"/>
<path d="M150,312 Q85,322 58,362 Q58,385 72,396 Z" fill="#d4d4d4" stroke="#b89000" stroke-width="4"/>
<path d="M40,360 l14,6 M36,385 l14,0 M48,410 l12,-6 M62,338 l10,10 M90,318 l6,12 M120,305 l4,12 M100,395 l10,8 M125,360 l10,8" stroke="#a88400" stroke-width="4"/></g>
<g id="i-text" transform="translate(-33.000,-36.000) scale(0.13196)"><path d="M290,352 L430,352 L430,380 L300,380 L290,400 Z" fill="#c0c0c0"/>
<rect x="275" y="293" width="150" height="57" fill="#fff" stroke="#111" stroke-width="7"/>
<text x="350" y="340" text-anchor="middle" font-family="Liberation Sans, sans-serif" font-weight="bold" font-size="50" fill="#111" textLength="128" lengthAdjust="spacingAndGlyphs">ABC</text>
<path d="M278,350 L278,425" stroke="#111" stroke-width="7"/>
<path d="M260,418 L296,418 L278,452 Z" fill="#111"/></g>
<g id="i-axes" transform="translate(-2.000,-66.000) scale(0.13196)"><path d="M42,578 L160,655" stroke="#e00000" stroke-width="18"/>
<path d="M148,668 L192,672 L172,636 Z" fill="#f00000"/>
<path d="M22,655 L150,588" stroke="#00c000" stroke-width="18" stroke-dasharray="14 6"/>
<path d="M138,568 L178,574 L152,608 Z" fill="#00c000"/>
<path d="M95,540 L95,682" stroke="#0000e0" stroke-width="22"/>
<path d="M68,548 L96,498 L124,548 Z" fill="#0000e0"/></g>
<g id="i-text3d" transform="translate(-33.000,-66.000) scale(0.13196)"><path d="M380,640 L420,560 L425,590 L400,650 Z" fill="#c8c8c8"/>
<text x="338" y="668" text-anchor="middle" font-family="Liberation Serif, serif" font-weight="bold" font-size="215" fill="#4a3a28" stroke="#4a3a28" stroke-width="10">A</text>
<text x="328" y="660" text-anchor="middle" font-family="Liberation Serif, serif" font-weight="bold" font-size="215" fill="#ccb494" stroke="#5a4630" stroke-width="5">A</text></g>
<g id="i-prev" transform="translate(-2.000,-6.000) scale(0.04946)"><path d="M60,390 Q120,440 180,420 L180,560 Q260,590 300,520 L200,500 Z" fill="#bbb"/>
<path d="M340,425 L470,568" stroke="#0a0a0a" stroke-width="72"/>
<circle cx="185" cy="252" r="122" fill="#a4cbe8" stroke="#1e1e1e" stroke-width="42"/>
<ellipse cx="150" cy="225" rx="55" ry="40" fill="#d4e8f8"/>
<path d="M242,198 L292,265 Q400,198 490,255 Q545,320 440,468 L382,395 Q300,420 192,492 Q196,350 242,198 Z" fill="#2a84ff" stroke="#0a1a40" stroke-width="12" stroke-linejoin="round"/>
<path d="M370,350 L470,290 L440,400 Z" fill="#1a50c0"/></g>
<g id="i-next" transform="translate(-33.000,-6.000) scale(0.04946)"><g transform="translate(1192,0) scale(-1,1)">
<path d="M60,390 Q120,440 180,420 L180,560 Q260,590 300,520 L200,500 Z" fill="#bbb"/>
<path d="M340,425 L470,568" stroke="#0a0a0a" stroke-width="72"/>
<circle cx="185" cy="252" r="122" fill="#a4cbe8" stroke="#1e1e1e" stroke-width="42"/>
<ellipse cx="150" cy="225" rx="55" ry="40" fill="#d4e8f8"/>
<path d="M242,198 L292,265 Q400,198 490,255 Q545,320 440,468 L382,395 Q300,420 192,492 Q196,350 242,198 Z" fill="#2a84ff" stroke="#0a1a40" stroke-width="12" stroke-linejoin="round"/>
<path d="M370,350 L470,290 L440,400 Z" fill="#1a50c0"/>
</g></g>
<g id="i-poscam" transform="translate(-2.000,-6.000) scale(0.09066)"><path d="M160,72 L175,95 L200,120 L212,200 L198,215 L190,285 L165,285 L160,240 L150,285 L125,285 L122,215 L108,190 L125,125 L148,95 Z" fill="#111"/>
<path d="M152,130 L185,128 L190,190 L175,235 L160,215 L148,240 L140,190 Z" fill="#fff"/>
<circle cx="160" cy="93" r="9" fill="#fff"/>
<path d="M85,265 L230,326 M78,326 L220,265" stroke="#f00000" stroke-width="12"/></g>
<g id="i-eye" transform="translate(-33.000,-6.000) scale(0.09066)"><ellipse cx="510" cy="240" rx="110" ry="60" fill="#d8d8d8" opacity="0.7"/>
<path d="M385,190 Q480,95 600,165 Q620,180 612,195 Q560,270 480,262 Q420,255 385,190 Z" fill="#e4e4e4"/>
<path d="M400,190 Q480,125 585,195 Q530,250 470,245 Q425,235 400,190 Z" fill="#fff"/>
<circle cx="480" cy="190" r="46" fill="#2a2a2a"/>
<circle cx="480" cy="190" r="22" fill="#000"/>
<circle cx="465" cy="175" r="12" fill="#fff"/>
<path d="M380,195 Q470,85 612,170" fill="none" stroke="#111" stroke-width="20" stroke-linecap="round"/>
<path d="M395,200 Q470,265 585,200" fill="none" stroke="#333" stroke-width="9"/>
<path d="M560,160 L625,185" stroke="#777" stroke-width="10"/></g>
<g id="i-walk" transform="translate(-2.000,-36.000) scale(0.09066)"><ellipse cx="103" cy="522" rx="44" ry="72" transform="rotate(-8 103 522)" fill="#0a0a0a"/>
<path d="M70,590 L150,575 L152,600 L76,615 Z" fill="#f0f0f0"/>
<ellipse cx="125" cy="632" rx="30" ry="28" fill="#0a0a0a"/>
<ellipse cx="226" cy="468" rx="44" ry="72" transform="rotate(10 226 468)" fill="#0a0a0a"/>
<path d="M178,530 L262,540 L258,562 L176,552 Z" fill="#f0f0f0"/>
<ellipse cx="212" cy="578" rx="30" ry="27" fill="#0a0a0a"/></g>
<g id="i-section" transform="translate(-33.000,-36.000) scale(0.09066)"><path d="M498,395 L632,526 L498,662 Z" fill="#0a0a0a"/>
<circle cx="485" cy="526" r="95" fill="#fff" stroke="#0a0a0a" stroke-width="10"/>
<path d="M365,523 L590,523" stroke="#0a0a0a" stroke-width="9"/>
<text x="485" y="503" text-anchor="middle" font-family="Liberation Sans, sans-serif" font-weight="bold" font-size="62" fill="#0a0a0a">C</text>
<text x="488" y="592" text-anchor="middle" font-family="Liberation Sans, sans-serif" font-weight="bold" font-size="58" fill="#0a0a0a" textLength="110" lengthAdjust="spacingAndGlyphs">A-5</text></g></defs>
<g shape-rendering="crispEdges">
<rect x="0" y="42" width="1366" height="1" fill="#a0a0a0"/><rect x="0" y="43" width="1366" height="1" fill="#fff"/>
<rect x="0" y="74" width="1366" height="1" fill="#a0a0a0"/>
<rect x="3" y="44" width="2" height="30" fill="#fff"/><rect x="5" y="44" width="1" height="30" fill="#a0a0a0"/>
<rect x="41" y="46" width="1" height="26" fill="#a0a0a0"/>
<rect x="171" y="46" width="1" height="26" fill="#a0a0a0"/>
<rect x="301" y="46" width="1" height="26" fill="#a0a0a0"/>
<rect x="431" y="46" width="1" height="26" fill="#a0a0a0"/>
<rect x="561" y="46" width="1" height="26" fill="#a0a0a0"/>
<rect x="629" y="46" width="1" height="26" fill="#a0a0a0"/>
<rect x="728" y="46" width="1" height="26" fill="#a0a0a0"/>
<rect x="825" y="44" width="1" height="30" fill="#a0a0a0"/><rect x="826" y="44" width="1" height="30" fill="#fff"/>
<rect x="435" y="44" width="30" height="29" fill="#f8f8f8"/><rect x="435" y="44" width="30" height="1" fill="#a8a8a8"/><rect x="435" y="44" width="1" height="29" fill="#a8a8a8"/><rect x="464" y="44" width="1" height="29" fill="#fff"/><rect x="435" y="72" width="30" height="1" fill="#fff"/>
<rect x="208.5" y="46.5" width="26" height="25" fill="none" stroke="#fff" stroke-width="1" stroke-dasharray="1 1"/>
<rect x="0" y="75" width="61" height="1" fill="#fff"/><rect x="0" y="78" width="60" height="2" fill="#fff"/><rect x="0" y="80" width="61" height="1" fill="#a0a0a0"/><rect x="60" y="76" width="1" height="4" fill="#a0a0a0"/>
<rect x="1" y="145" width="58" height="1" fill="#a0a0a0"/>
<rect x="1" y="241" width="58" height="1" fill="#a0a0a0"/>
<rect x="1" y="337" width="58" height="1" fill="#a0a0a0"/>
<rect x="1" y="433" width="58" height="1" fill="#a0a0a0"/>
<rect x="1" y="529" width="58" height="1" fill="#a0a0a0"/>
<rect x="0" y="593" width="61" height="1" fill="#a0a0a0"/>
<rect x="60" y="81" width="1" height="512" fill="#fff"/>
<rect x="61" y="75" width="1" height="626" fill="#a0a0a0"/><rect x="62" y="75" width="1" height="625" fill="#696969"/><rect x="62" y="75" width="1302" height="1" fill="#696969"/>
<rect x="0" y="700" width="62" height="1" fill="#a0a0a0"/>
<rect x="1363" y="75" width="1" height="626" fill="#fff"/><rect x="1364" y="75" width="2" height="626" fill="#f0f0f0"/><rect x="62" y="700" width="1304" height="1" fill="#fff"/>
<rect x="0" y="701" width="1366" height="3" fill="#fff"/>
<rect x="0" y="437" width="29" height="29" fill="#f8f8f8"/><rect x="0" y="437" width="29" height="1" fill="#a8a8a8"/><rect x="28" y="437" width="1" height="29" fill="#fff"/><rect x="0" y="465" width="29" height="1" fill="#fff"/>
<rect x="32.5" y="115.5" width="26" height="25" fill="none" stroke="#fff" stroke-width="1" stroke-dasharray="1 1"/>
<rect x="87" y="705" width="1" height="21" fill="#a0a0a0"/><rect x="1020" y="705" width="1" height="21" fill="#a0a0a0"/>
<rect x="1159" y="704" width="205" height="1" fill="#a0a0a0"/><rect x="1159" y="704" width="1" height="23" fill="#a0a0a0"/><rect x="1364" y="704" width="2" height="24" fill="#fff"/><rect x="1159" y="727" width="207" height="1" fill="#fff"/>
</g>
<use href="#i-select" x="10" y="47"/>
<use href="#i-pencil" x="47" y="47"/>
<use href="#i-rect" x="78" y="47"/>
<use href="#i-circle" x="109" y="47"/>
<use href="#i-arc" x="140" y="47"/>
<use href="#i-comp" x="178" y="47"/>
<use href="#i-eraser" x="209" y="47"/>
<use href="#i-tape" x="240" y="47"/>
<use href="#i-paint" x="271" y="47"/>
<use href="#i-pushpull" x="308" y="47"/>
<use href="#i-move" x="339" y="47"/>
<use href="#i-rotate" x="370" y="47"/>
<use href="#i-offset" x="401" y="47"/>
<use href="#i-orbit" x="439" y="47"/>
<use href="#i-pan" x="470" y="47"/>
<use href="#i-zoom" x="501" y="47"/>
<use href="#i-zoomext" x="532" y="47"/>
<use href="#i-addloc" x="569" y="47"/>
<use href="#i-terrain" x="600" y="47"/>
<use href="#i-building" x="637" y="47"/>
<use href="#i-photo" x="668" y="47"/>
<use href="#i-earth" x="699" y="47"/>
<use href="#i-boxdown" x="736" y="47"/>
<use href="#i-boxup" x="767" y="47"/>
<use href="#i-house" x="798" y="47"/>
<use href="#i-select" x="1" y="86"/>
<use href="#i-comp" x="33" y="86"/>
<use href="#i-paint" x="2" y="116"/>
<use href="#i-eraser" x="33" y="116"/>
<use href="#i-rect" x="1" y="152"/>
<use href="#i-pencil" x="32" y="152"/>
<use href="#i-circle" x="1.5" y="182"/>
<use href="#i-arc" x="32" y="182"/>
<use href="#i-polygon" x="2" y="212"/>
<use href="#i-freehand" x="33" y="212"/>
<use href="#i-move" x="2" y="248"/>
<use href="#i-pushpull" x="33" y="248"/>
<use href="#i-rotate" x="2" y="278"/>
<use href="#i-followme" x="33" y="278"/>
<use href="#i-scale" x="2" y="308"/>
<use href="#i-offset" x="33" y="308"/>
<use href="#i-tape" x="2" y="344"/>
<use href="#i-dimension" x="33" y="344"/>
<use href="#i-protractor" x="2" y="374"/>
<use href="#i-text" x="33" y="374"/>
<use href="#i-axes" x="2" y="404"/>
<use href="#i-text3d" x="33" y="404"/>
<use href="#i-orbit" x="3" y="441"/>
<use href="#i-pan" x="34" y="441"/>
<use href="#i-zoom" x="2.5" y="470"/>
<use href="#i-zoomext" x="34" y="470"/>
<use href="#i-prev" x="2" y="500"/>
<use href="#i-next" x="33" y="500"/>
<use href="#i-poscam" x="2" y="536"/>
<use href="#i-eye" x="33" y="536"/>
<use href="#i-walk" x="2" y="566"/>
<use href="#i-section" x="33" y="566"/>

<!-- window buttons -->
<defs>
<linearGradient id="wbg" x1="0" y1="0" x2="0" y2="1"><stop offset="0" stop-color="#d4d4d4"/><stop offset="0.48" stop-color="#a4a4a4"/><stop offset="0.5" stop-color="#6c6c6c"/><stop offset="1" stop-color="#8e8e8e"/></linearGradient>
<linearGradient id="wbr" x1="0" y1="0" x2="0" y2="1"><stop offset="0" stop-color="#eeb0a0"/><stop offset="0.48" stop-color="#d87868"/><stop offset="0.5" stop-color="#c02c14"/><stop offset="0.8" stop-color="#d04a28"/><stop offset="1" stop-color="#e08050"/></linearGradient>
<clipPath id="wbc"><path d="M1259,0 H1362 V13 Q1362,18 1357,18 H1264 Q1259,18 1259,13 Z"/></clipPath>
<radialGradient id="stc" cx="0.6" cy="0.55" r="0.6"><stop offset="0" stop-color="#fffdf4"/><stop offset="1" stop-color="#e2d4a8"/></radialGradient>
<radialGradient id="sth" cx="0.4" cy="0.75" r="0.7"><stop offset="0" stop-color="#ffffff"/><stop offset="1" stop-color="#a8c8f0"/></radialGradient>
</defs>
<g clip-path="url(#wbc)">
<rect x="1259" y="0" width="55" height="18" fill="url(#wbg)"/>
<rect x="1314" y="0" width="48" height="18" fill="url(#wbr)"/>
<rect x="1287" y="0" width="1" height="18" fill="#3c3c3c"/><rect x="1288" y="0" width="1" height="18" fill="#d8d8d8" opacity=".6"/>
<rect x="1314" y="0" width="1" height="18" fill="#4a2018"/><rect x="1313" y="0" width="1" height="18" fill="#d8d8d8" opacity=".6"/>
</g>
<path d="M1259.5,0 V13 Q1259.5,17.5 1264,17.5 H1357 Q1361.5,17.5 1361.5,13 V0" fill="none" stroke="#2a2a2a" stroke-width="1"/>
<path d="M1260.5,0 V13 Q1260.5,16.5 1264,16.5 H1357 Q1360.5,16.5 1360.5,13 V0" fill="none" stroke="#fff" stroke-opacity=".55" stroke-width="1"/>
<rect x="1269" y="8.5" width="10.5" height="4" fill="#fff" stroke="#484858" stroke-width="1"/>
<rect x="1297.3" y="3" width="7.4" height="6.4" fill="none" stroke="#484858" stroke-width="3.6"/><rect x="1297.3" y="3" width="7.4" height="6.4" fill="none" stroke="#fff" stroke-width="2.2"/>
<rect x="1295.3" y="5.8" width="7.4" height="6.4" fill="#707070" stroke="#484858" stroke-width="3.6"/><rect x="1295.3" y="5.8" width="7.4" height="6.4" fill="#707070" stroke="#fff" stroke-width="2.2"/>
<path d="M1334.3,4.3 L1342.4,11.8 M1342.4,4.3 L1334.3,11.8" stroke="#484050" stroke-width="5"/>
<path d="M1334.3,4.3 L1342.4,11.8 M1342.4,4.3 L1334.3,11.8" stroke="#fff" stroke-width="3.2"/>
<!-- app icon -->
<g>
<path d="M1,9 L7,4.5 L11,8 L10,15 L3,17 L1,14 Z" fill="#f4ecd8" stroke="#6a6a6a" stroke-width="0.8"/>
<path d="M1,9 L7,4.5 L11,8 L6,11 Z" fill="#e8b070"/>
<path d="M3,12 l2,-1 l0,3 l-2,1 Z" fill="#889"/>
<path d="M12.6,3.4 L14.6,5.2 L5,17.5 L2.4,18.6 L3,16 Z" fill="#e02020" stroke="#801010" stroke-width="0.5"/>
<path d="M3,16 L5,17.5 L2.4,18.6 Z" fill="#222"/>
</g>
<!-- status icons -->
<g>
<circle cx="11.9" cy="716" r="9" fill="url(#stc)" stroke="#7a4a12" stroke-width="2.2"/>
<path d="M11.9,708.5 a3,3.4 0 0 1 2.6,5 l-1.8,3.2 l-0.3,5 h-1 l-0.3,-5 l-1.8,-3.2 a3,3.4 0 0 1 2.6,-5 Z" fill="#f4b0a8"/>
<circle cx="40" cy="716" r="9" fill="url(#stc)" stroke="#7a4a12" stroke-width="2.2"/>
<circle cx="40" cy="710.3" r="1.4" fill="#0a0a0a"/>
<path d="M37.7,713 Q40,711.6 42.3,713 L42,717.5 L41.2,717.5 L41,722.3 H39 L38.8,717.5 L38,717.5 Z" fill="#0a0a0a"/>
<circle cx="68.1" cy="716" r="9" fill="url(#stc)" stroke="#7a4a12" stroke-width="2.2"/>
<text x="68" y="721.6" text-anchor="middle" font-family="Liberation Serif, serif" font-size="16.5" fill="#6a6a6a">G</text>
<circle cx="106" cy="716" r="9" fill="url(#sth)" stroke="#1c4866" stroke-width="2.4"/>
<text x="106.2" y="722" text-anchor="middle" font-family="Liberation Sans, sans-serif" font-weight="bold" font-size="16" fill="#0a0a0a">?</text>
</g>

</svg>
</body>
</html>
